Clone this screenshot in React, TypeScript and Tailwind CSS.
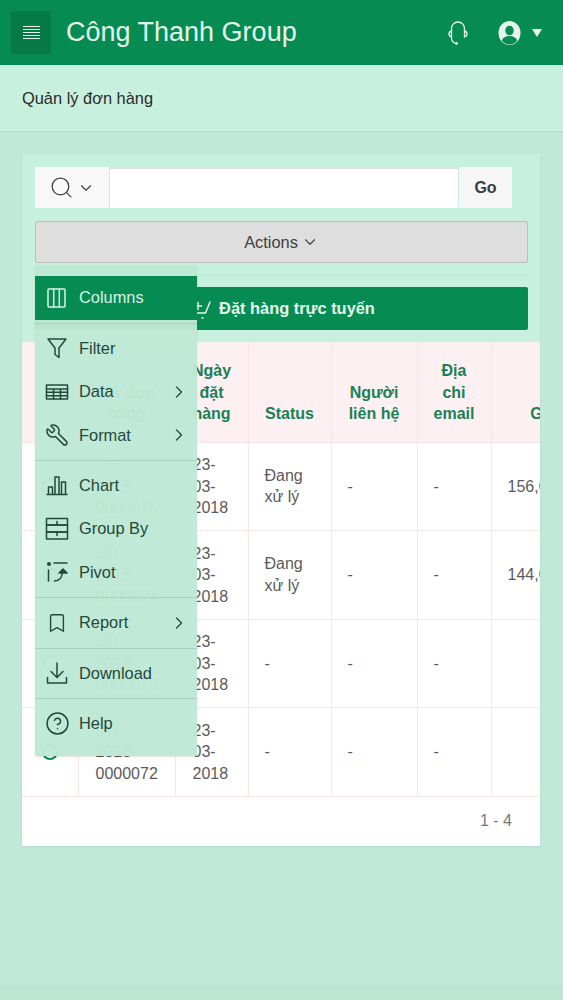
import React from 'react';
import { Search, ChevronDown, ChevronRight, Wrench, Bookmark, CircleHelp } from 'lucide-react';

const iconProps = {
  fill: 'none',
  stroke: 'currentColor',
  strokeWidth: 1.5,
  strokeLinecap: 'round' as const,
  strokeLinejoin: 'round' as const,
};

const ColumnsIcon = () => (
  <svg width="24" height="24" viewBox="0 0 24 24" {...iconProps}>
    <rect x="3" y="3" width="17" height="18" rx="1" />
    <path d="M8.700 3v18M14.300 3v18" />
  </svg>
);

const FilterIcon = () => (
  <svg width="24" height="24" viewBox="0 0 24 24" {...iconProps}>
    <path d="M3 3h18l-7 9v9.500l-4-3V12z" />
  </svg>
);

const DataIcon = () => (
  <svg width="24" height="24" viewBox="0 0 24 24" {...iconProps}>
    <rect x="1.500" y="5" width="21" height="14" />
    <path d="M1.500 9h21M1.500 12.300h21M1.500 15.700h21M8.500 9v10M15.500 9v10" />
  </svg>
);

const ChartIcon = () => (
  <svg width="24" height="24" viewBox="0 0 24 24" {...iconProps}>
    <path d="M2 21.500h20M3.500 21v-7h4v7M10 21V4h4v17M16.500 21V9h4v12" />
  </svg>
);

const GroupIcon = () => (
  <svg width="24" height="24" viewBox="0 0 24 24" {...iconProps}>
    <rect x="1.500" y="1.500" width="21" height="6.500" />
    <rect x="1.500" y="8" width="21" height="7" />
    <rect x="1.500" y="15" width="21" height="7" />
    <path d="M12 4.500V8M12 15v3.500" />
  </svg>
);

const PivotIcon = () => (
  <svg width="24" height="24" viewBox="0 0 24 24" {...iconProps}>
    <circle cx="4" cy="4" r="2" fill="currentColor" stroke="none" />
    <path d="M9 3h13M3.500 10v11M9.500 21c5 0 7.500-3 8-9" />
    <path d="M14 13l4-4 4 4z" fill="currentColor" />
  </svg>
);

const DownloadIcon = () => (
  <svg width="24" height="24" viewBox="0 0 24 24" {...iconProps}>
    <path d="M12 2v14M6 10.500l6 6 6-6M2.500 16.500V22h19v-5.500" />
  </svg>
);

const CartPlusIcon = () => (
  <svg width="26" height="24" viewBox="0 0 26 24" {...iconProps}>
    <path d="M1 16h16.500L22 5M5 21h1M14 21h1M6.500 9h7M10 5.500v7" />
  </svg>
);

type MenuItem = { label: string; icon: React.ReactNode; sub?: boolean; active?: boolean };

const menuGroups: { items: MenuItem[]; cls: string }[] = [
  { cls: 'pt-[11px] pb-[3px]', items: [{ label: 'Columns', icon: <ColumnsIcon />, active: true }] },
  {
    cls: 'pt-[3px] pb-[2.5px]',
    items: [
      { label: 'Filter', icon: <FilterIcon /> },
      { label: 'Data', icon: <DataIcon />, sub: true },
      { label: 'Format', icon: <Wrench size={24} strokeWidth={1.5} className="-scale-x-100" />, sub: true },
    ],
  },
  {
    cls: 'pt-[3px] pb-[3px]',
    items: [
      { label: 'Chart', icon: <ChartIcon /> },
      { label: 'Group By', icon: <GroupIcon /> },
      { label: 'Pivot', icon: <PivotIcon /> },
    ],
  },
  { cls: 'pt-[3px] pb-[3px]', items: [{ label: 'Report', icon: <Bookmark size={22} strokeWidth={1.5} />, sub: true }] },
  { cls: 'pt-[3px] pb-[3px]', items: [{ label: 'Download', icon: <DownloadIcon /> }] },
  { cls: 'pt-[3px] pb-[10.5px]', items: [{ label: 'Help', icon: <CircleHelp size={25} strokeWidth={1.4} /> }] },
];

const rows = [
  { id: '0000075', status: 'Đang xử lý', total: '156,000,000' },
  { id: '0000074', status: 'Đang xử lý', total: '144,000,000' },
  { id: '0000073', status: '-', total: '' },
  { id: '0000072', status: '-', total: '' },
];

const thClass = 'border-r border-[#f9e3e7] px-[14px] pb-[17px] align-bottom text-center text-[16px] leading-[21.5px] font-bold text-[#1a8055]';
const tdClass = 'border-r border-b border-[#f9e6e9] align-middle text-[16px] leading-[21.5px] text-[#5a5a5a]';

export default function App() {
  return (
    <div className="relative flex min-h-[1000px] w-[563px] flex-col overflow-hidden bg-[#c1e9d9] font-['Liberation_Sans',Arial,sans-serif]">
      <header className="flex h-[65px] shrink-0 items-center bg-[#068c52] pl-[11px] pr-[21px] text-[#e4f6ec]">
        <button className="flex h-[43px] w-[40px] items-center justify-center rounded-[2px] bg-[#057a47]">
          <span className="flex w-[17px] flex-col gap-[2px]">
            <i className="h-px bg-[#e4f6ec]" />
            <i className="h-px bg-[#e4f6ec]" />
            <i className="h-px bg-[#e4f6ec]" />
            <i className="h-px bg-[#e4f6ec]" />
            <i className="h-px bg-[#e4f6ec]" />
          </span>
        </button>
        <h1 className="ml-[15px] text-[27px] font-normal leading-none">Công Thanh Group</h1>
        <svg className="ml-auto" width="22" height="26" viewBox="0 0 22 26" fill="none" stroke="currentColor" strokeWidth="1.300" strokeLinecap="round">
          <path d="M4.500 11V8.500a6.500 6.500 0 0 1 13 0V11" />
          <path d="M4.500 11C2.500 11.500 2 12.500 2 14s.5 2.500 2.500 3zM17.500 11c2 .5 2.500 1.500 2.500 3s-.5 2.500-2.500 3z" />
          <path d="M4.500 17.500c0 3 1 4.500 3 5.500" />
          <circle cx="9.500" cy="23.500" r=".8" fill="currentColor" />
        </svg>
        <svg className="ml-[29px]" width="23" height="24" viewBox="0 0 23 24">
          <ellipse cx="11.500" cy="12" rx="11" ry="12" fill="#e4f6ec" />
          <ellipse cx="11.500" cy="9.500" rx="4.200" ry="4.800" fill="#068c52" />
          <path d="M3.800 19.500c1.500-3.500 4.500-4.500 7.700-4.500s6.200 1 7.700 4.500a10 11 0 0 1-15.400 0z" fill="#068c52" />
        </svg>
        <span className="ml-[11px] h-0 w-0 border-x-[5.500px] border-t-[8px] border-x-transparent border-t-[#e4f6ec]" />
      </header>

      <div className="flex h-[67px] shrink-0 items-center border-b border-[#afe0c9] bg-[#c8f0de] pl-[22px] text-[16.400px] text-[#2b2b2b]">
        Quản lý đơn hàng
      </div>

      <main className="pl-[22px] pr-[23px] pt-[22px]">
        <section className="relative bg-white shadow-[0_1px_2px_rgba(0,0,0,0.08)]">
          <div className="bg-[#c8f0de] px-[13px] pb-[12px] pt-[13px]">
            <div className="flex h-[41px] w-[477px] gap-px">
              <div className="flex w-[74px] items-center justify-center gap-[3px] bg-[#f8f8f8] text-[#3f3f3f]">
                <Search size={25} strokeWidth={1.200} />
                <ChevronDown size={18} strokeWidth={1.500} />
              </div>
              <div className="flex-1 rounded-[2px] border-t-2 border-[#dddddd] bg-white" />
              <button className="w-[53px] bg-[#f6f6f6] text-[16px] font-bold text-[#3b3b3b]">Go</button>
            </div>
            <button className="mt-[13px] flex h-[42px] w-[493px] items-center justify-center gap-[3px] rounded-[2px] border border-[#bdbdbd] bg-[#dedede] text-[16.400px] text-[#404040]">
              Actions
              <ChevronDown size={18} strokeWidth={1.500} />
            </button>
            <div className="mt-[12px] w-[493px] border-t border-[#bfe9d6]" />
            <button className="mt-[11px] flex h-[43px] w-[493px] items-center justify-center gap-[5px] rounded-[2px] bg-[#068c52] text-[16.400px] font-bold text-[#e4f6ec]">
              <CartPlusIcon />
              Đặt hàng trực tuyến
            </button>
          </div>

          <div className="overflow-hidden">
            <table className="w-[593px] table-fixed border-collapse">
              <thead>
                <tr className="h-[100px] border-b border-[#f9e3e7] bg-[#fdf0f2]">
                  <th className={`${thClass} w-[56px]`} />
                  <th className={`${thClass} w-[97px]`}>Mã đơn hàng</th>
                  <th className={`${thClass} w-[73px] px-[10px]`}>Ngày đặt hàng</th>
                  <th className={`${thClass} w-[83px]`}>Status</th>
                  <th className={`${thClass} w-[86px]`}>Người liên hệ</th>
                  <th className={`${thClass} w-[74px]`}>Địa chỉ email</th>
                  <th className={`${thClass} w-[124px] border-r-0`}>Giá trị</th>
                </tr>
              </thead>
              <tbody>
                {rows.map(row => (
                  <tr key={row.id} className="h-[88.500px]">
                    <td className={tdClass}>
                      <span className="mx-auto block h-[16px] w-[16px] rounded-full border-2 border-[#068c52]" />
                    </td>
                    <td className={`${tdClass} pl-[17px]`}>
                      DH-
                      <br />
                      2018-
                      <br />
                      {row.id}
                    </td>
                    <td className={`${tdClass} pl-[17px]`}>
                      23-
                      <br />
                      03-
                      <br />
                      2018
                    </td>
                    <td className={`${tdClass} px-[16px]`}>{row.status}</td>
                    <td className={`${tdClass} px-[16px]`}>-</td>
                    <td className={`${tdClass} px-[16px]`}>-</td>
                    <td className={`${tdClass} whitespace-nowrap border-r-0 px-[16px]`}>{row.total}</td>
                  </tr>
                ))}
              </tbody>
            </table>
          </div>

          <div className="flex h-[49px] items-center justify-end pr-[28px] text-[16px] text-[#777777]">1 - 4</div>

          {/* actions dropdown sits over the table */}
          <nav className="absolute left-[13px] top-[111px] w-[162px] rounded-b-[2px] bg-[#bfe8d6]/97 text-[16.400px] text-[#23493b] shadow-[0_1px_2px_rgba(0,0,0,0.12)]">
            {menuGroups.map((group, i) => (
              <div key={i} className={`${group.cls} ${i > 0 ? 'border-t border-[#a5d3bf]' : ''}`}>
                {group.items.map(item => (
                  <div
                    key={item.label}
                    className={`flex h-[43.500px] items-center ${item.active ? 'bg-[#068c52] text-[#d8f3e6]' : ''}`}
                  >
                    <span className="flex w-[44px] justify-center">{item.icon}</span>
                    <span>{item.label}</span>
                    {item.sub && <ChevronRight size={20} strokeWidth={1.500} className="ml-auto mr-[8px]" />}
                  </div>
                ))}
              </div>
            ))}
          </nav>
        </section>
      </main>

      <div className="mt-auto h-[15px] bg-[#bce6d1]" />
    </div>
  );
}
